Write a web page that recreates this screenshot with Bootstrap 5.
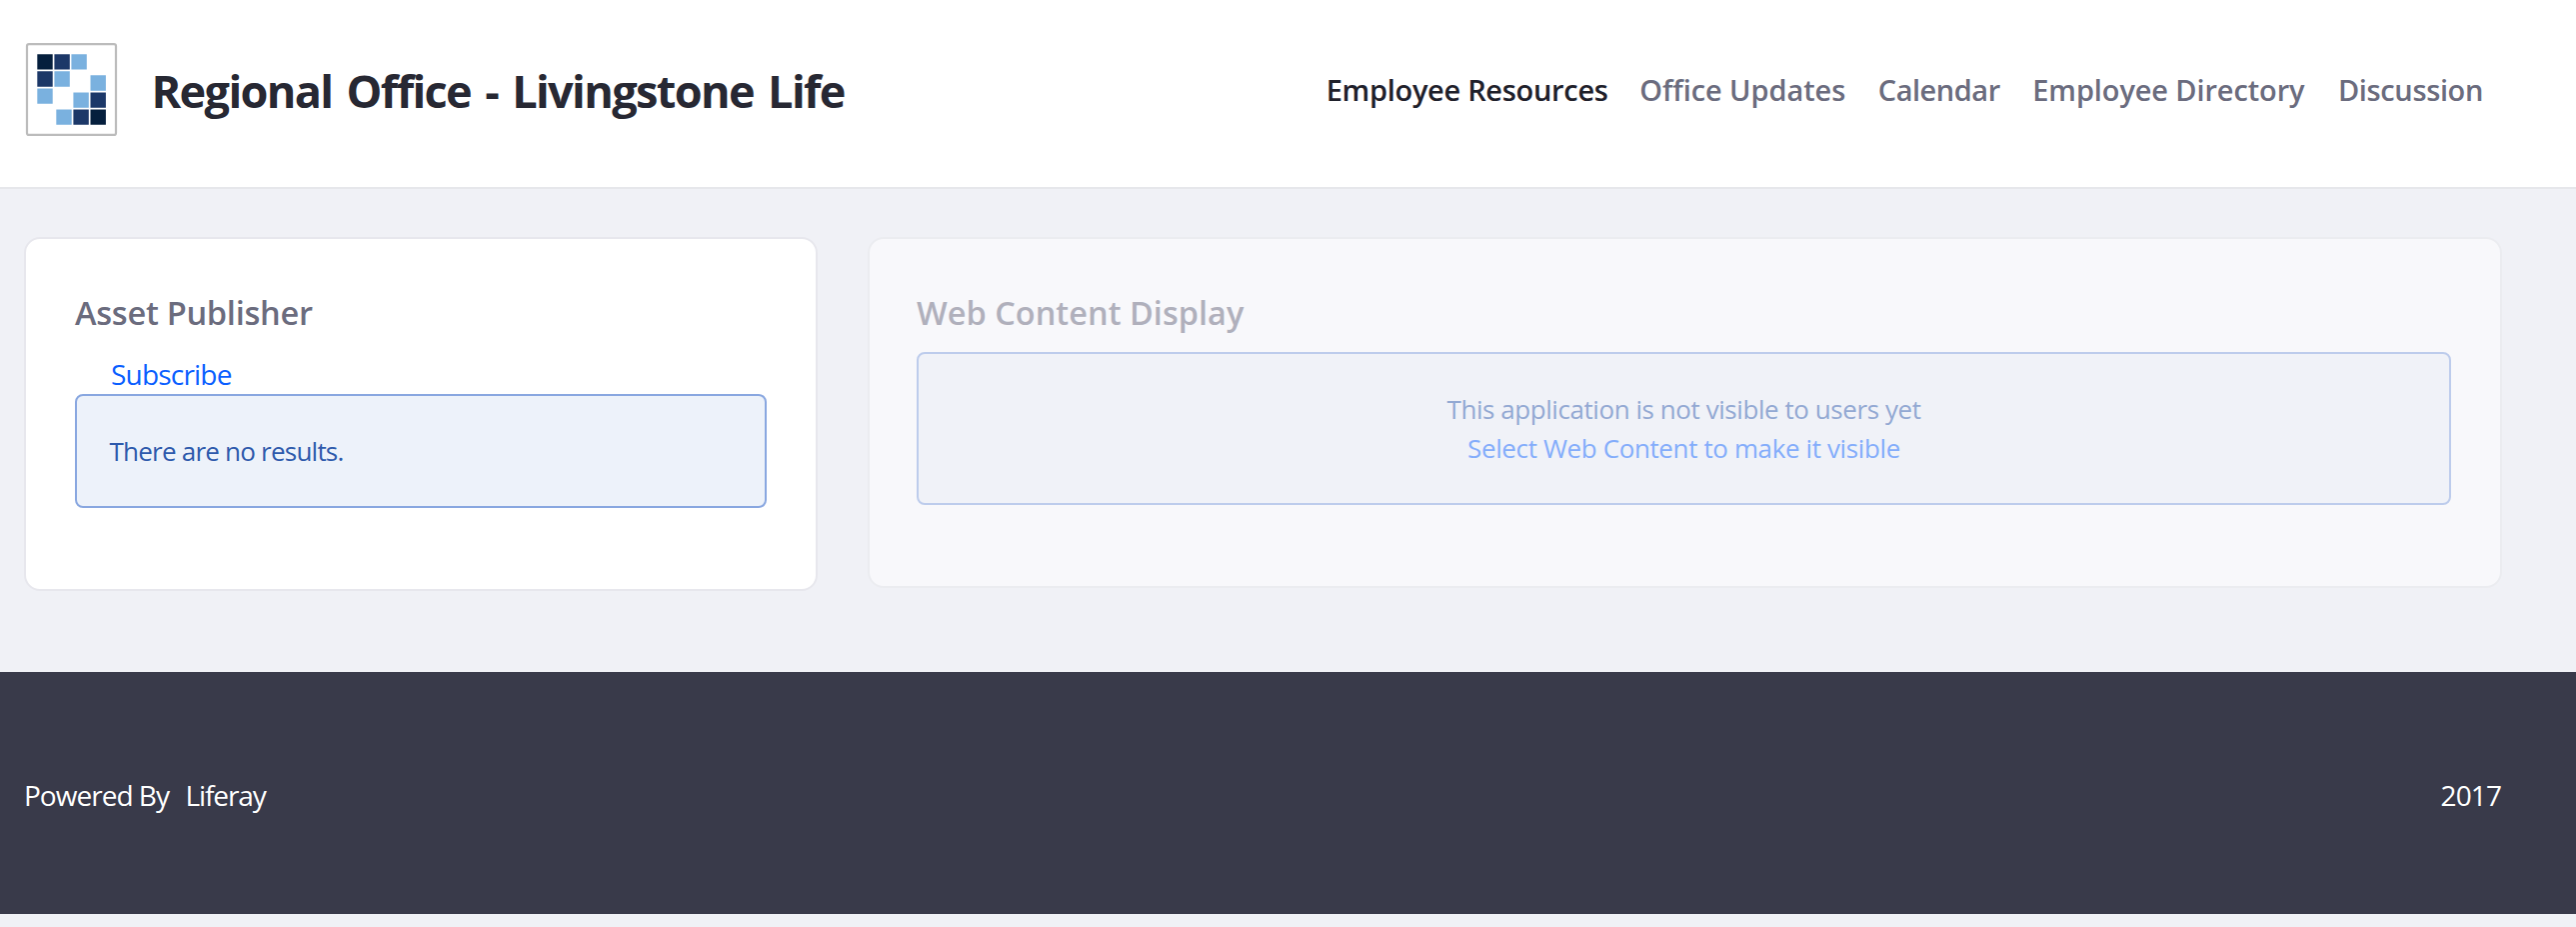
<!DOCTYPE html>
<html lang="en">
<head>
<meta charset="utf-8">
<meta name="viewport" content="width=device-width, initial-scale=1">
<title>Regional Office - Livingstone Life</title>
<link href="https://cdn.jsdelivr.net/npm/bootstrap@5.3.0/dist/css/bootstrap.min.css" rel="stylesheet">
<style>
  body { background: #f0f1f6; font-family: "Open Sans", "Noto Sans", sans-serif; font-size: 28px; line-height: 40px; }
  a { text-decoration: none; }
  .site-header { height: 189px; border-bottom: 2px solid #e6e7eb; padding: 0 93px 8px 24px; }
  .site-logo { width: 95px; height: 95px; }
  .site-title { font-size: 45px; font-weight: 700; letter-spacing: -1.6px; word-spacing: 4px; color: #272833; line-height: 60px; margin: 2px 0 0 32.5px; }
  .site-nav { gap: 32.5px; font-size: 29px; font-weight: 600; }
  .site-nav .nav-link { padding: 0; color: #6b6c7e; letter-spacing: -.3px; line-height: 40px; }
  .site-nav .nav-link.active { color: #1f212b; margin-right: -1px; }
  .t-updates.nav-link { letter-spacing: -.09px; }
  .t-calendar.nav-link { letter-spacing: -.47px; }
  .t-directory.nav-link { letter-spacing: -.12px; margin-right: 1px; }
  .t-discuss.nav-link { letter-spacing: -.37px; }
  .site-main { padding: 48px 74px 0 24px; height: 483px; gap: 49.5px; }
  .portlet { border: 2px solid #e7e7ed; border-radius: 16px; padding: 54px 49px 80px; background: #fff; }
  .portlet-side { width: 794px; height: 354px; }
  .portlet-wide { height: 351px; background: #f8f8fb; border-color: #ebecf0; padding-left: 47.5px; }
  .portlet-title { font-size: 32.5px; font-weight: 600; line-height: 40px; color: #6b6c7e; letter-spacing: -.24px; margin-bottom: 19px; }
  .portlet-wide .portlet-title { color: #b0b0bc; letter-spacing: .02px; }
  .subscribe { color: #0b5fff; letter-spacing: -.8px; margin-left: 36px; padding-top: 2px; }
  .notice { border: 2px solid #89a7e0; border-radius: 8px; background: #edf2fa; color: #2e5aac; font-size: 26px; line-height: 39px; letter-spacing: -.77px; margin: 0; }
  .notice-empty { height: 114px; padding: 0 32.5px; }
  .notice-hidden { height: 153px; border-color: #bdccec; background: #f0f2f8; color: #93a9d3; letter-spacing: -.44px; }
  .notice-hidden a { color: #84adfb; letter-spacing: -.38px; }
  .site-footer { height: 242px; background: #393a4a; color: #fff; padding: 3px 75px 0 24px; }
  .site-footer a { color: #fff; letter-spacing: -1.1px; margin-left: 16.5px; }
  .t-powered { letter-spacing: -.98px; }
  .t-year { letter-spacing: -.91px; }
</style>
</head>
<body>
<header class="site-header bg-white d-flex align-items-center">
  <svg class="site-logo flex-shrink-0" viewBox="24 42 95 95" aria-hidden="true">
    <rect x="27" y="44.1" width="89" height="90.8" rx="2" fill="#fff" stroke="#bcbcbc" stroke-width="2.2"/>
    <path fill="#7ab1df" d="M71.4 54.2h15.4v15.4H71.4zM54.4 71.3h15.4v15.4H54.4zM37.3 88.4h15.4v15.4H37.3zM90.5 75.3h15.4v15.4H90.5zM73.4 92.4h15.4v15.4H73.4zM56.3 109.4h15.4v15.4H56.3z"/>
    <path fill="#1c3868" d="M54.4 54.2h15.4v15.4H54.4zM37.3 71.3h15.4v15.4H37.3zM90.5 92.4h15.4v15.4H90.5zM73.4 109.4h15.4v15.4H73.4z"/>
    <path fill="#051f3d" d="M37.3 54.2h15.4v15.4H37.3zM90.5 109.4h15.4v15.4H90.5z"/>
  </svg>
  <h1 class="site-title text-nowrap">Regional Office - Livingstone Life</h1>
  <nav class="nav site-nav flex-nowrap text-nowrap ms-auto">
    <a class="nav-link active" href="#">Employee Resources</a>
    <a class="nav-link t-updates" href="#">Office Updates</a>
    <a class="nav-link t-calendar" href="#">Calendar</a>
    <a class="nav-link t-directory" href="#">Employee Directory</a>
    <a class="nav-link t-discuss" href="#">Discussion</a>
  </nav>
</header>
<main class="site-main d-flex align-items-start">
  <section class="portlet portlet-side flex-shrink-0">
    <h2 class="portlet-title">Asset Publisher</h2>
    <div class="subscribe"><a class="text-reset" href="#">Subscribe</a></div>
    <div class="notice notice-empty d-flex align-items-center">There are no results.</div>
  </section>
  <section class="portlet portlet-wide flex-grow-1">
    <h2 class="portlet-title">Web Content Display</h2>
    <div class="notice notice-hidden d-flex flex-column align-items-center justify-content-center">
      <span>This application is not visible to users yet</span>
      <a href="#">Select Web Content to make it visible</a>
    </div>
  </section>
</main>
<footer class="site-footer d-flex align-items-center justify-content-between">
  <div><span class="t-powered">Powered By</span><a href="#">Liferay</a></div>
  <div class="t-year">2017</div>
</footer>
<script src="https://cdn.jsdelivr.net/npm/bootstrap@5.3.0/dist/js/bootstrap.bundle.min.js"></script>
</body>
</html>
